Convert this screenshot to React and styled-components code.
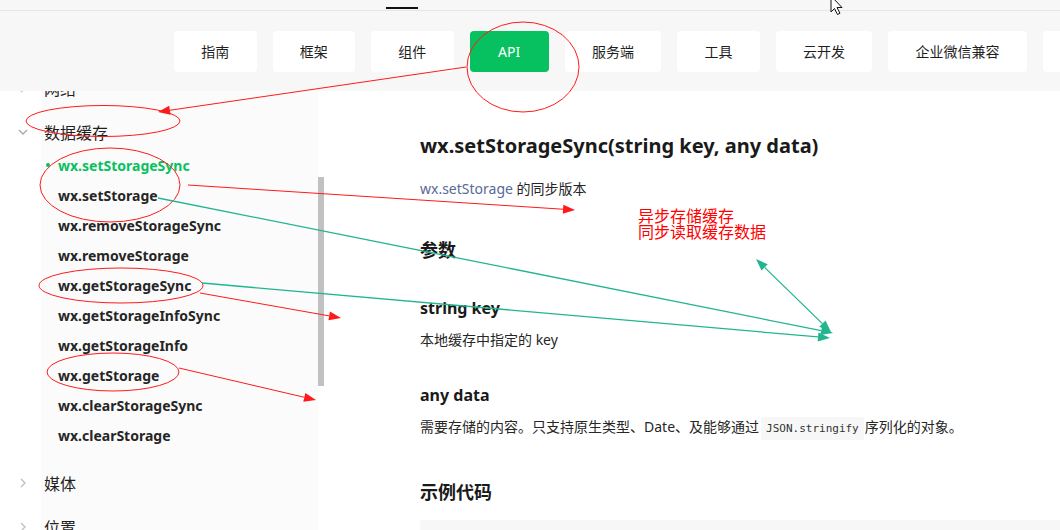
import React from 'react';
import styled, { createGlobalStyle } from 'styled-components';

const GlobalStyle = createGlobalStyle`
  html, body {
    margin: 0;
    padding: 0;
    background: #fff;
    overflow: hidden;
  }
  body {
    font-family: "Noto Sans", "Noto Sans CJK SC", sans-serif;
    color: #1f1f1f;
  }
`

const Page = styled.div`
  position: relative;
  width: 1060px;
  height: 530px;
  overflow: hidden;
  background: #fff;
`

const TopStrip = styled.div`
  height: 10px;
  background: #f7f7f7;
  border-bottom: 1px solid #e6e6e6;
  display: flex;
  align-items: flex-end;
  padding-left: 386px;
`

const TabMark = styled.div`
  width: 32px;
  height: 2px;
  margin-bottom: 1px;
  background: #111;
`

const NavBand = styled.nav`
  height: 80px;
  background: #f7f7f7;
  display: flex;
  align-items: center;
  gap: 16px;
  padding-left: 174px;
`

const NavButton = styled.div`
  flex-shrink: 0;
  height: 41px;
  line-height: 41px;
  padding: 0 ${p => (p.$active ? '28.5px' : '27.25px')};
  border-radius: 4px;
  font-size: 14px;
  white-space: nowrap;
  background: ${p => (p.$active ? '#07c160' : '#fff')};
  color: ${p => (p.$active ? '#fff' : '#1f1f1f')};
`

const Body = styled.div`
  display: flex;
  height: 439px;
`

const Sidebar = styled.aside`
  display: flex;
  flex-shrink: 0;
`

const ListArea = styled.div`
  width: 318px;
  overflow: hidden;
  background: linear-gradient(to right, #fff 41px, #fbfbfb 41px);
`

const List = styled.div`
  margin-top: -25px;
`

const GroupHeader = styled.div`
  height: 44px;
  display: flex;
  align-items: center;
  padding-left: 17px;
  font-size: 16px;
  color: #1f1f1f;
`

const Chevron = styled.span`
  width: 12px;
  height: 12px;
  margin-right: 15px;
  display: flex;
  align-items: center;
  justify-content: center;
`

const SubList = styled.div`
  margin-top: -4px;
  padding-bottom: 11px;
`

const SubItem = styled.div`
  height: 30px;
  display: flex;
  align-items: center;
  padding-left: 46px;
  font-size: 14px;
  font-weight: 700;
  color: ${p => (p.$active ? '#07c160' : '#262626')};
`

const Dot = styled.span`
  width: 4px;
  height: 4px;
  margin-right: 8px;
  border-radius: 50%;
  background: ${p => (p.$active ? '#07c160' : 'transparent')};
`

const Track = styled.div`
  width: 6px;
  padding-top: 86px;
`

const Thumb = styled.div`
  height: 209px;
  background: #c1c1c1;
`

const Main = styled.main`
  flex: 1;
  padding-left: 96px;
  overflow: hidden;
`

const Title = styled.h1`
  margin: 41px 0 0;
  font-size: 20px;
  line-height: 28px;
  font-weight: 700;
  color: #1a1a1a;
  white-space: nowrap;
`

const Para = styled.p`
  margin: ${p => p.$gap}px 0 0;
  font-size: 14px;
  line-height: 22px;
  color: #262626;
  white-space: nowrap;
`

const Link = styled.span`
  color: #576b95;
`

const SectionTitle = styled.h2`
  margin: ${p => p.$gap}px 0 0;
  font-size: 18px;
  line-height: 26px;
  font-weight: 700;
  color: #1a1a1a;
`

const ParamTitle = styled.h3`
  margin: ${p => p.$gap}px 0 0;
  font-size: 16px;
  line-height: 24px;
  font-weight: 700;
  color: #1a1a1a;
`

const Code = styled.code`
  display: inline-block;
  margin: 0 1px 0 2px;
  padding: 0 5px;
  line-height: 23px;
  background: #f7f7f7;
  border-radius: 2px;
  font-family: "DejaVu Sans Mono", "Liberation Mono", monospace;
  font-size: 11px;
  color: #333;
  vertical-align: middle;
`

const CodeBlock = styled.pre`
  margin: 15px 0 0;
  height: 120px;
  background: #f7f7f7;
`

const Overlay = styled.svg`
  position: absolute;
  left: 0;
  top: 0;
  pointer-events: none;
`

const Note = styled.div`
  position: absolute;
  left: 638px;
  top: 207px;
  font-family: "Noto Sans CJK SC", sans-serif;
  font-size: 16px;
  line-height: 16px;
  color: #ff0000;
  white-space: nowrap;
`

const ChevronRight = () => (
  <svg width="8" height="10" viewBox="0 0 8 10">
    <polyline points="2,1 6,5 2,9" fill="none" stroke="#bdbdbd" strokeWidth="1.3" />
  </svg>
)

const ChevronDown = () => (
  <svg width="10" height="8" viewBox="0 0 10 8">
    <polyline points="1,2 5,6 9,2" fill="none" stroke="#a8a8a8" strokeWidth="1.3" />
  </svg>
)

const navItems = ['指南', '框架', '组件', 'API', '服务端', '工具', '云开发', '企业微信兼容', '更多']

const storageItems = [
  'wx.setStorageSync',
  'wx.setStorage',
  'wx.removeStorageSync',
  'wx.removeStorage',
  'wx.getStorageSync',
  'wx.getStorageInfoSync',
  'wx.getStorageInfo',
  'wx.getStorage',
  'wx.clearStorageSync',
  'wx.clearStorage',
]

const RED = '#ff1a1a'
const GREEN = '#22b58f'

const ellipses = [
  [523, 67, 56, 45],
  [103, 121, 77, 15.5],
  [110, 185, 70, 37],
  [121, 285.5, 82, 17.5],
  [113, 372, 66, 19],
]

// [x1, y1, x2, y2, colour, head at start, head at end]
const arrows = [
  [466, 67, 158, 112, RED, false, true],
  [188, 185, 575, 210, RED, false, true],
  [200, 293, 341, 318, RED, false, true],
  [179, 368, 316, 400, RED, false, true],
  [158, 198, 833, 333, GREEN, false, true],
  [202, 283, 830, 338, GREEN, false, true],
  [831, 332, 756, 259, GREEN, true, true],
]

const head = (x1, y1, x2, y2, len = 12, half = 4.5) => {
  const dx = x2 - x1
  const dy = y2 - y1
  const d = Math.hypot(dx, dy)
  const ux = dx / d
  const uy = dy / d
  const bx = x2 - ux * len
  const by = y2 - uy * len
  return {
    base: [bx, by],
    points: `${x2},${y2} ${bx - uy * half},${by + ux * half} ${bx + uy * half},${by - ux * half}`,
  }
}

const Annotations = () => (
  <Overlay width="1060" height="530" viewBox="0 0 1060 530">
    {ellipses.map(([cx, cy, rx, ry], i) => (
      <ellipse key={i} cx={cx} cy={cy} rx={rx} ry={ry} fill="none" stroke={RED} strokeWidth="1" />
    ))}
    {arrows.map(([x1, y1, x2, y2, c, atStart, atEnd], i) => {
      const end = head(x1, y1, x2, y2)
      const start = head(x2, y2, x1, y1)
      const a = atStart ? start.base : [x1, y1]
      const b = atEnd ? end.base : [x2, y2]
      return (
        <g key={i}>
          <line x1={a[0]} y1={a[1]} x2={b[0]} y2={b[1]} stroke={c} strokeWidth={c === RED ? 1 : 1.3} />
          {atEnd && <polygon points={end.points} fill={c} />}
          {atStart && <polygon points={start.points} fill={c} />}
        </g>
      )
    })}
    <path
      d="M831 -4 L831 12 L834.5 8.5 L837.5 14.5 L840 13.3 L837 7.5 L842 7.5 Z"
      fill="#fff"
      stroke="#111"
      strokeWidth="1"
      strokeLinejoin="round"
    />
  </Overlay>
)

export default function App() {
  return (
    <Page>
      <GlobalStyle />
      <TopStrip>
        <TabMark />
      </TopStrip>
      <NavBand>
        {navItems.map(n => (
          <NavButton key={n} $active={n === 'API'}>{n}</NavButton>
        ))}
      </NavBand>
      <Body>
        <Sidebar>
          <ListArea>
            <List>
              <GroupHeader>
                <Chevron><ChevronRight /></Chevron>网络
              </GroupHeader>
              <GroupHeader>
                <Chevron><ChevronDown /></Chevron>数据缓存
              </GroupHeader>
              <SubList>
                {storageItems.map((s, i) => (
                  <SubItem key={s} $active={i === 0}>
                    <Dot $active={i === 0} />
                    {s}
                  </SubItem>
                ))}
              </SubList>
              <GroupHeader>
                <Chevron><ChevronRight /></Chevron>媒体
              </GroupHeader>
              <GroupHeader>
                <Chevron><ChevronRight /></Chevron>位置
              </GroupHeader>
            </List>
          </ListArea>
          <Track>
            <Thumb />
          </Track>
        </Sidebar>
        <Main>
          <Title>wx.setStorageSync(string key, any data)</Title>
          <Para $gap={18}>
            <Link>wx.setStorage</Link> 的同步版本
          </Para>
          <SectionTitle $gap={37}>参数</SectionTitle>
          <ParamTitle $gap={33}>string key</ParamTitle>
          <Para $gap={9}>本地缓存中指定的 key</Para>
          <ParamTitle $gap={32}>any data</ParamTitle>
          <Para $gap={9}>
            需要存储的内容。只支持原生类型、Date、及能够通过<Code>JSON.stringify</Code>序列化的对象。
          </Para>
          <SectionTitle $gap={39}>示例代码</SectionTitle>
          <CodeBlock />
        </Main>
      </Body>
      <Note>
        异步存储缓存
        <br />
        同步读取缓存数据
      </Note>
      <Annotations />
    </Page>
  )
}
